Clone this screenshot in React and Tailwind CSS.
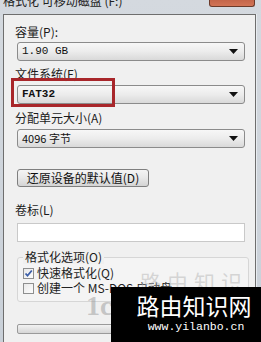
const cjk = { fontFamily: '"Noto Sans CJK SC", "Liberation Sans", sans-serif' }

function Arrow() {
  return (
    <svg width="9" height="5" viewBox="0 0 9 5" className="shrink-0">
      <path d="M0 0h9L4.5 5z" fill="#111" />
    </svg>
  )
}

function Combo({ children, mono, className = '' }) {
  return (
    <div className={`ml-[13px] w-[228px] h-[19px] flex items-center pl-[4px] pr-[6px] rounded-[3px] border border-[#8b8b8b] bg-gradient-to-b from-[#f7f7f7] via-[#ececec] to-[#d9d9d9] ${className}`}>
      <span
        className="flex-1 text-[11px] leading-none text-[#111]"
        style={mono ? { fontFamily: '"Liberation Mono", monospace', fontWeight: 700 } : cjk}
      >
        {children}
      </span>
      <Arrow />
    </div>
  )
}

function Label({ children, className = '' }) {
  return (
    <div className={`pl-[11px] text-[12px] leading-[16px] text-[#1b1b1b] ${className}`} style={cjk}>
      {children}
    </div>
  )
}

function Check({ checked, children }) {
  return (
    <div className="flex items-center gap-[3px] h-[12px]">
      <div className="w-[11px] h-[11px] border border-[#8e8f8f] bg-gradient-to-br from-[#e9e9e9] to-[#fdfdfd] flex items-center justify-center">
        {checked && (
          <svg width="9" height="9" viewBox="0 0 9 9">
            <path d="M1.5 4.5l2 2.2L7.8 1.5" stroke="#3b5ea8" strokeWidth="1.8" fill="none" />
          </svg>
        )}
      </div>
      <span className="text-[12px] leading-none text-[#222] whitespace-nowrap" style={cjk}>{children}</span>
    </div>
  )
}

export default function App() {
  return (
    <div className="relative w-[261px] h-[342px] overflow-hidden bg-gradient-to-b from-[#d4d9df] to-[#c9d0d8]">
      {/* title bar */}
      <div className="h-[14px] flex items-start pl-[3px] overflow-hidden">
        <span className="-mt-[7px] text-[12px] leading-[16px] text-[#222]" style={cjk}>格式化 可移动磁盘 (F:)</span>
      </div>
      <div className="absolute top-0 right-[6px] w-[46px] h-[7px] rounded-b-[3px] border border-t-0 border-[#6b3a2a] bg-gradient-to-b from-[#c4664a] to-[#d27456]" />

      <div className="flex">
        {/* main panel */}
        <div className="ml-[3px] w-[253px] h-[330px] border border-[#6e6e6e] bg-[#f0f0f0] pt-[9px]">
          <Label>容量(P):</Label>
          <Combo mono className="mt-[2px]">
            <span className="font-normal">1.90 GB</span>
          </Combo>
          <Label className="mt-[5px]">文件系统(F)</Label>
          <Combo mono className="mt-[3px]">FAT32</Combo>
          <Label className="mt-[6px]">分配单元大小(A)</Label>
          <Combo className="mt-[3px]">4096 字节</Combo>
          <button
            className="ml-[13px] mt-[21px] w-[132px] h-[18px] rounded-[3px] border border-[#7f7f7f] bg-gradient-to-b from-[#f4f4f4] via-[#e8e8e8] to-[#d4d4d4] text-[12px] leading-none text-[#111] flex items-center justify-center"
            style={cjk}
          >
            还原设备的默认值(D)
          </button>
          <Label className="mt-[15px]">卷标(L)</Label>
          <div className="ml-[13px] mt-[5px] w-[228px] h-[19px] border border-[#c9c9c9] bg-white" />
          <div className="ml-[13px] mt-[8px] w-[232px] h-[52px] relative">
            <div className="absolute left-0 right-0 top-[7px] bottom-0 border border-[#d6d6d6] rounded-[3px] bg-[#f4f4f4]" />
            <div className="relative ml-[6px] px-[2px] w-fit bg-[#f0f0f0] text-[12px] leading-[14px] text-[#1b1b1b]" style={cjk}>
              格式化选项(O)
            </div>
            <div className="relative ml-[6px] mt-[3px] flex flex-col gap-[3px]">
              <Check checked>快速格式化(Q)</Check>
              <Check>创建一个 MS-DOS 启动盘</Check>
            </div>
          </div>
          <div className="ml-[13px] mt-[22px] w-[228px] h-[10px] rounded-[2px] border border-[#9a9a9a] bg-gradient-to-b from-[#f2f2f2] to-[#d6d6d6]" />
        </div>
        <div className="flex-1 border-l border-[#e8ecf0]" />
      </div>

      {/* faint watermark */}
      <div className="absolute left-[86px] top-[292px] text-[28px] leading-none text-[#9a9a9a]/50 font-bold" style={{ fontFamily: '"Liberation Serif", serif' }}>
        1c
      </div>
      <div className="absolute left-[140px] top-[271px] text-[21px] leading-[21px] text-[#b5b5b5]/50 tracking-[6px]" style={cjk}>
        路由知识
      </div>

      {/* red highlight */}
      <div className="absolute left-[11px] top-[78px] w-[104px] h-[29px] border-[3px] border-[#a8262a]" />

      {/* black watermark */}
      <div className="absolute left-[111px] top-[287px] w-[150px] h-[55px] bg-black flex flex-col items-center pt-[5px]">
        <div className="pl-[16px] text-[23px] leading-[26px] text-white" style={cjk}>路由知识网</div>
        <div className="pl-[20px] mt-[2px] text-[11.5px] leading-[14px] text-white" style={{ fontFamily: '"Liberation Mono", monospace' }}>
          www.yilanbo.cn
        </div>
      </div>
    </div>
  )
}
